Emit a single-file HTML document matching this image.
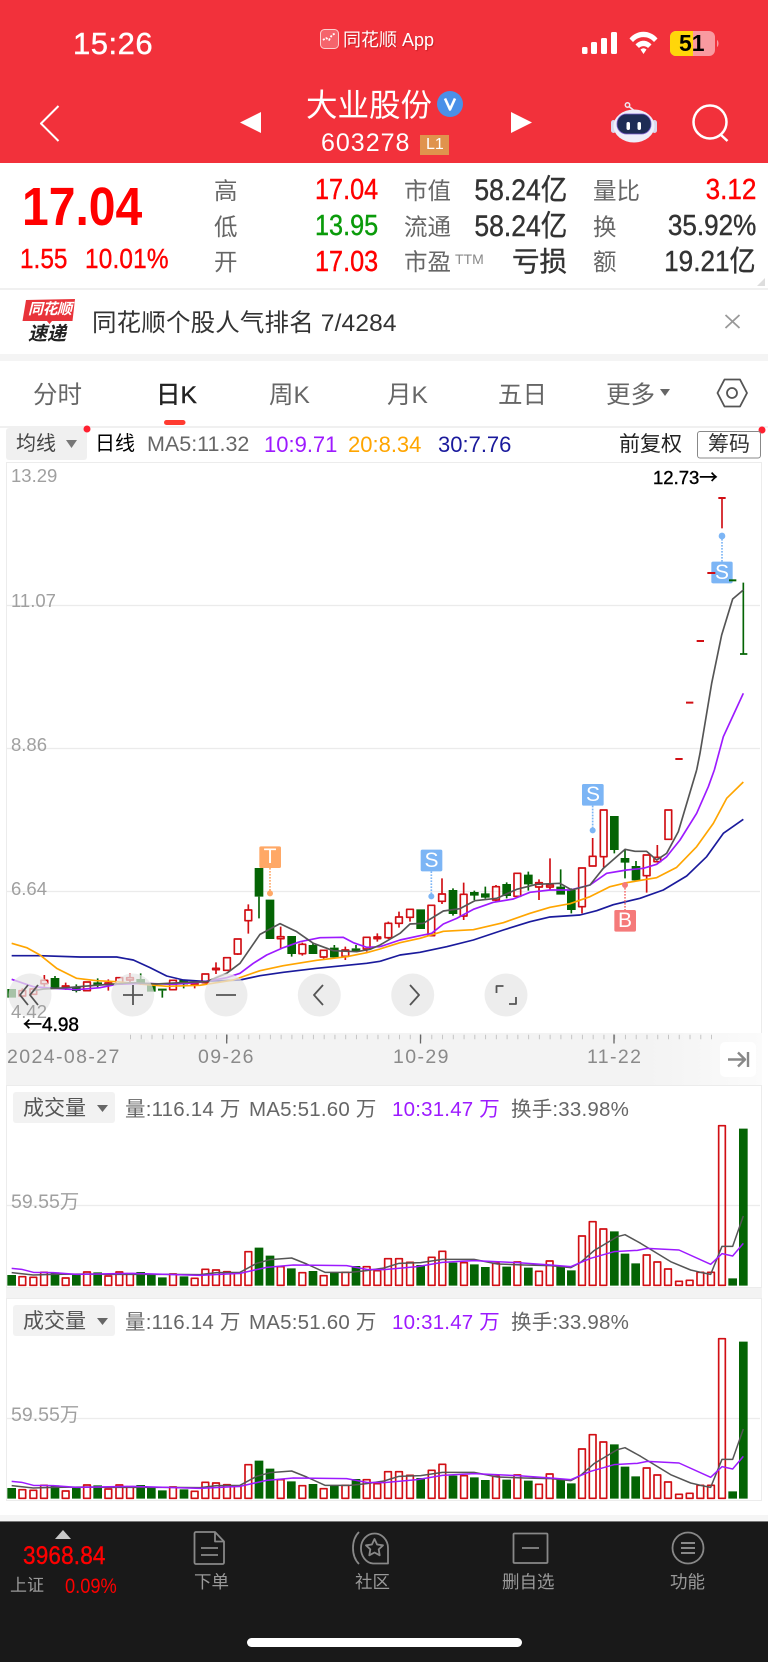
<!DOCTYPE html>
<html lang="zh"><head><meta charset="utf-8"><title>大业股份</title>
<style>
html,body{margin:0;padding:0;background:#fff}
#p{position:relative;width:768px;height:1662px;overflow:hidden;background:#fff;font-family:"Liberation Sans","Noto Sans CJK SC",sans-serif}
.b{position:absolute}
.t{position:absolute;line-height:1;white-space:nowrap}
.n{transform:scaleX(.87);transform-origin:left center}
.nr{transform:scaleX(.9);transform-origin:right center}
.m{-webkit-text-stroke:.4px currentColor}
svg{position:absolute;left:0;top:0}
svg path{stroke-linejoin:round}
.lab{color:#666;font-size:23.5px}
.r{color:#f00}
.dk{color:#333}
.ax{color:#a0a0a0;font-size:18.5px}
.vt{font-size:20.5px;color:#666;letter-spacing:.2px}
.ar{font-family:"Noto Sans CJK SC",sans-serif}
.bd{width:22px;text-align:center;font-size:21px;line-height:22px;color:#fff}
.dt{font-size:19.5px;color:#8a8a8a;letter-spacing:1.4px;top:1048px}
</style></head><body><div id="p">
<div class="b" style="left:0;top:0;width:768px;height:163px;background:#f2313b"></div>
<div class="b" style="left:0;top:288px;width:768px;height:1.5px;background:#f0f0f0"></div>
<div class="b" style="left:0;top:354px;width:768px;height:7px;background:#f4f4f4"></div>
<div class="b" style="left:0;top:425.5px;width:768px;height:2px;background:#f0f0f0"></div>
<div class="b" style="left:6px;top:428px;width:81px;height:32px;background:#f0f0f0;border-radius:3px"></div>
<div class="b" style="left:6px;top:462px;width:754px;height:570px;border:1.5px solid #ececec;box-sizing:content-box"></div>
<div class="b" style="left:6px;top:1033px;width:756px;height:52px;background:linear-gradient(90deg,#f3f3f3 85%,#fbfbfb)"></div>
<div class="b" style="left:6px;top:1085px;width:754px;height:201px;border:1.5px solid #ececec"></div>
<div class="b" style="left:6px;top:1288px;width:756px;height:10px;background:#f3f3f3"></div>
<div class="b" style="left:6px;top:1298px;width:754px;height:201px;border:1.5px solid #ececec"></div>
<div class="b" style="left:0;top:1515px;width:768px;height:6px;background:#f5f5f5"></div>
<div class="b" style="left:0;top:1521px;width:768px;height:141px;background:#191919;border-top:1px solid #777;box-sizing:border-box"></div>
<div class="b" style="left:13px;top:1092px;width:102px;height:31px;background:#f2f2f2;border-radius:3px"></div>
<div class="b" style="left:13px;top:1305px;width:102px;height:31px;background:#f2f2f2;border-radius:3px"></div>

<svg width="768" height="1662" viewBox="0 0 768 1662" fill="none">
<!-- status icons -->
<g fill="#fff">
<rect x="582" y="47" width="5.500" height="7" rx="1.500"/><rect x="591" y="42" width="6" height="12" rx="1.500"/><rect x="601" y="38" width="6" height="16" rx="1.500"/><rect x="611" y="32" width="6" height="22" rx="1.500"/>
<path d="M629.500 38.500C637 29.500 650 29.500 657.500 38.500L654 42C648.500 35.500 638.500 35.500 633 42z"/>
<path d="M635.500 44.500C640 39.500 647 39.500 651.500 44.500L648 48C645.500 45.500 641.500 45.500 639 48z"/>
<path d="M640.500 49.500C642.500 47.800 644.500 47.800 646.500 49.500L643.500 54z"/>
</g>
<rect x="670" y="31" width="45" height="25" rx="6" fill="#f99aa0"/>
<path d="M693 31H676a6 6 0 0 0-6 6v13a6 6 0 0 0 6 6h17z" fill="#ffd60a"/>
<path d="M717 40c2 1 2 6 0 7z" fill="#f99aa0"/>
<!-- app icon -->
<rect x="320.500" y="29.500" width="18" height="19" rx="4" fill="#fff" fill-opacity=".25" stroke="#fbd0d0"/>
<path d="M323 40l3-2 3 2 3-5 4-2" stroke="#fff" stroke-width="1.800" stroke-dasharray="2 1.500"/>
<!-- nav -->
<path d="M58.500 106L41 123.500 58.500 141" stroke="#fff" stroke-width="2"/>
<path d="M261 112v21l-21-10.500zM511 112v21l21-10.500z" fill="#fff"/>
<circle cx="450" cy="104" r="13" fill="#4a90e8"/>
<path d="M445 98.500l5 11 5-11" stroke="#fff" stroke-width="2.600"/>
<rect x="420" y="135" width="29" height="20" fill="#e0934d"/>
<!-- robot -->
<circle cx="627.500" cy="105" r="2.200" stroke="#f0e8f0" stroke-width="1.500"/><path d="M629 106.500l5 4" stroke="#f0e8f0" stroke-width="1.500"/>
<rect x="611" y="120" width="5" height="13" rx="2.500" fill="#d8d8ee"/><rect x="652" y="120" width="5" height="13" rx="2.500" fill="#d8d8ee"/>
<ellipse cx="634" cy="126" rx="20.500" ry="16.500" fill="#eeeefa"/>
<rect x="617" y="114" width="34" height="20" rx="9.500" fill="#1e2c55" stroke="#7a5ccc" stroke-width=".8"/>
<rect x="626.500" y="122" width="3.500" height="8" rx="1.700" fill="#fff"/><rect x="637.500" y="122" width="3.500" height="8" rx="1.700" fill="#fff"/>
<circle cx="710" cy="122" r="16.500" stroke="#fff" stroke-width="2.500"/><path d="M720.500 134.500l7 6.500" stroke="#fff" stroke-width="2.500"/>
<!-- corner -->
<path d="M765 278v8h-8z" fill="#ddd"/>
<!-- banner logo -->
<path d="M26 300L75 299l-2.500 22H52l-2.500 3-2.500-3H22.500z" fill="#e8333a"/>
<path d="M725.500 315l14 13M739.500 315l-14 13" stroke="#999" stroke-width="1.800"/>
<!-- tabs -->
<rect x="164" y="420" width="21.500" height="5" rx="2.500" fill="#ff3b30"/>
<path d="M660 389h10l-5 7z" fill="#666"/>
<path d="M717.500 393l7-13.500h15.500l7 13.500-7 13.500h-15.500z" stroke="#555" stroke-width="1.800"/>
<circle cx="732" cy="393" r="5" stroke="#555" stroke-width="1.800"/>
<circle cx="87" cy="429" r="3.500" fill="#ff2030"/><circle cx="762" cy="430" r="3.500" fill="#ff2030"/>
<path d="M66 440h11l-5.500 8z" fill="#777"/>
<rect x="697.500" y="431.500" width="63" height="26.500" rx="2.500" stroke="#888" stroke-width="1"/>
<!-- grid -->
<path d="M7 605.500H760M7 748.500H760M7 891.500H760" stroke="#ebebeb" stroke-width="1.200"/>
<path d="M7 1205.500H760M7 1418.500H760" stroke="#ececec" stroke-width="1.200"/>
<!-- ticks -->
<path d="M130 1037H712" stroke="#c4c4c4" stroke-width="4.500" stroke-dasharray="1 9.760"/>
<path d="M226.700 1034.500v9M420.500 1034.500v9M614 1034.500v9" stroke="#666" stroke-width="1.300"/>
<rect x="720" y="1042" width="36" height="35" rx="5" fill="#fff"/>
<path d="M728 1059.500h16M738 1052.500l7 7-7 7M748 1052v15" stroke="#888" stroke-width="2.400"/>

<!-- left candles -->
<g transform="translate(0 800) scale(.33333)">
<path stroke="#d10f14" stroke-width="5" d="M57 572h20v16h-20zM67 565V572M67 588V595M90 567h20v16h-20zM123 541h20v10h-20zM133 525V541M133 551V560M187 558h20v3h-20zM197 548V558M197 561V570M251 546h20v26h-20zM315 549h20v3h-20zM325 538V549M325 552V572M348 533h20v19h-20zM380 533h20v7h-20zM390 520V533M390 540V548M509 541h20v28h-20zM574 550h20v3h-20zM584 545V550M584 553V565M606 522h20v26h-20zM638 505h20v4h-20zM648 487V505M648 509V522M671 473h20v38h-20zM703 417h20v45h-20zM713 462V465M735 330h20v32h-20zM745 313V330M745 362V401M832 410h20v6h-20zM842 380V410M842 416V445M897 433h20v28h-20zM907 428V433M907 461V467M961 451h20v20h-20zM971 471V476M1026 450h20v19h-20zM1036 440V450M1036 469V480M1090 412h20v35h-20zM1100 447V455M1122 411h20v5h-20zM1132 400V411M1132 416V425"/>
<path stroke="#046404" stroke-width="26" d="M35 567V593M165 534V563M229 560V573M293 547V556M422 537V550M454 550V575M487 566V572M551 540V553M777 204V290M810 299V417M875 408V462M939 435V462M1003 443V472M1068 445V455"/>
<path stroke="#046404" stroke-width="5" d="M165 528V567M229 553V577M293 535V565M422 520V555M487 572V593M551 553V565M777 290V355M875 462V470M939 428V435M1003 435V443M1068 435V445"/>
<path stroke="#1a1a9c" stroke-width="5" d="M35 467L120 467 240 471 350 471 400 480 450 503 500 528 550 540 610 544 720 540 780 527 850 517 950 505 1040 496 1100 490 1140 484"/>
<path stroke="#ffa500" stroke-width="5" d="M35 430L80 443 120 465 170 505 230 535 290 542 350 545 420 552 500 559 600 556 700 540 780 512 850 497 950 481 1040 470 1100 458 1140 447"/>
<path stroke="#9d1aff" stroke-width="5" d="M35 538L100 560 160 565 230 569 300 563 350 553 430 550 520 553 600 547 680 533 720 520 760 490 800 465 850 443 900 425 960 413 1030 412 1060 428 1100 442 1140 440"/>
<path stroke="#555" stroke-width="5" d="M100 572L130 567 200 563 300 555 400 548 470 552 560 547 620 545 680 520 720 490 780 403 840 371 890 395 940 430 1000 452 1070 455 1110 448 1140 435"/>
<rect x="778" y="139" width="65" height="65" rx="5" fill="#ffa866"/>
<path d="M810 204V280" stroke="#ffa866" stroke-width="5" stroke-dasharray="5 4"/><circle cx="810" cy="280" r="9" fill="#ffa866"/>
</g>
<!-- right candles -->
<g transform="translate(380 770) scale(.33333)">
<path stroke="#d10f14" stroke-width="5" d="M15 460h20v43h-20zM25 455V460M25 503V507M47 441h20v19h-20zM57 425V441M57 460V473M80 418h20v24h-20zM90 442V455M144 406h20v91h-20zM176 372h20v22h-20zM186 325V372M186 394V402M241 373h20v65h-20zM251 338V373M251 438V450M338 350h20v40h-20zM348 345V350M348 390V396M402 310h20v69h-20zM467 338h20v13h-20zM477 328V338M477 351V390M500 345h20v6h-20zM510 265V345M510 351V360M596 294h20v116h-20zM606 410V430M628 259h20v29h-20zM638 204V259M661 120h20v140h-20zM671 260V292M790 255h20v62h-20zM800 317V368M822 262h20v13h-20zM832 225V262M855 120h20v88h-20z"/>
<path stroke="#046404" stroke-width="26" d="M122 418V477M219 360V432M283 366V377M316 370V383M380 342V378M445 314V343M542 350V374M574 360V420M703 138V240M735 264V278M768 288V331"/>
<path stroke="#046404" stroke-width="5" d="M219 355V437M283 362V390M316 350V386M380 337V385M445 305V362M542 298V350M574 355V430M703 240V250M735 238V325M768 273V288"/>
<path stroke="#1a1a9c" stroke-width="5" d="M0 574L60 555 120 547 200 530 280 510 370 480 450 455 510 441 600 435 650 422 700 404 780 385 850 360 920 318 980 260 1030 190 1090 148"/>
<path stroke="#ffa500" stroke-width="5" d="M0 537L60 518 120 505 190 484 280 479 370 458 450 430 510 412 570 401 630 380 690 350 740 338 830 323 890 292 950 230 1000 160 1040 85 1090 36"/>
<path stroke="#9d1aff" stroke-width="5" d="M0 530L60 510 120 497 155 490 190 462 230 445 280 418 340 397 400 387 450 367 510 360 570 360 630 345 680 310 740 300 790 295 830 283 860 260 900 210 950 130 985 50 1003 0"/>
<path stroke="#555" stroke-width="5" d="M0 525L60 490 90 462 130 460 190 423 240 416 285 392 350 385 410 358 470 343 540 340 575 360 630 345 670 295 735 238 765 244 800 244 830 270 860 250 895 185 950 0"/>
<rect x="122" y="239" width="65" height="65" rx="5" fill="#7cb5f5"/><path d="M154 304V379" stroke="#7cb5f5" stroke-width="5" stroke-dasharray="5 4"/><circle cx="154" cy="379" r="9" fill="#7cb5f5"/>
<rect x="606" y="42" width="65" height="65" rx="5" fill="#7cb5f5"/><path d="M638 107V181" stroke="#7cb5f5" stroke-width="5" stroke-dasharray="5 4"/><circle cx="638" cy="181" r="9" fill="#7cb5f5"/>
<rect x="703" y="420" width="65" height="65" rx="5" fill="#f57a7a"/><path d="M735 345V420" stroke="#f57a7a" stroke-width="5" stroke-dasharray="5 4"/><circle cx="735" cy="345" r="9" fill="#f57a7a"/>
</g>
<!-- top-right candles -->
<g transform="translate(600 440) scale(.33333)">
<path stroke="#d10f14" stroke-width="6" d="M226 957h22M258 788h22M290 603h22M355 174h22"/>
<path stroke="#d10f14" stroke-width="5" d="M366 174V265"/>
<path stroke="#046404" stroke-width="5" d="M430 428V642M420 642h22"/>
<path stroke="#9d1aff" stroke-width="5" d="M343 990L370 890 400 825 430 760"/>
<path stroke="#555" stroke-width="5" d="M290 990L300 940 335 730 365 585 398 477 430 450"/>
<rect x="334" y="365" width="64" height="65" rx="5" fill="#7cb5f5"/><path d="M366 288V365" stroke="#7cb5f5" stroke-width="5" stroke-dasharray="5 4"/><circle cx="366" cy="288" r="10" fill="#7cb5f5"/>
<path stroke="#d10f14" stroke-width="6" d="M322 399h24"/><path stroke="#046404" stroke-width="6" d="M387 421h22"/>
</g>
<!-- volume -->
<g id="vol">
<g transform="translate(0 1080) scale(.33333)">
<path stroke="#046404" stroke-width="26" d="M35 617V585M165 617V577M229 617V585M293 617V577M422 617V576M454 617V583M487 617V592M552 617V589M777 617V503M810 617V527M874 617V565M939 617V573M1003 617V578M1068 617V558"/>
<path stroke="#d10f14" stroke-width="5" d="M57 590h20V616h-20zM90 592h20V616h-20zM122 577h20V616h-20zM187 594h20V616h-20zM251 576h20V616h-20zM315 588h20V616h-20zM348 576h20V616h-20zM380 581h20V616h-20zM509 582h20V616h-20zM574 595h20V616h-20zM606 568h20V616h-20zM638 570h20V616h-20zM671 575h20V616h-20zM703 580h20V616h-20zM735 515h20V616h-20zM832 560h20V616h-20zM897 578h20V616h-20zM961 587h20V616h-20zM1026 577h20V616h-20zM1090 560h20V616h-20zM1122 572h20V616h-20z"/>
<path stroke="#555" stroke-width="4.500" d="M35 578L100 585 160 583 260 582 320 583 500 583 600 584 650 578 720 577 770 550 810 539 875 534 920 552 975 577 1050 577 1100 572 1152 564"/>
<path stroke="#9d1aff" stroke-width="4.500" d="M35 565L65 568 100 577 160 578 230 583 400 580 500 583 600 586 720 580 800 562 880 555 1040 557 1100 568 1152 569"/>
</g>
<g transform="translate(384 1080) scale(.33333)">
<path stroke="#046404" stroke-width="26" d="M110 617V555M207 617V548M271 617V553M304 617V561M368 617V560M433 617V563M530 617V560M562 617V571M691 617V454M723 617V521M755 617V550M1046 617V595M1078 617V146"/>
<path stroke="#d10f14" stroke-width="5" d="M2 536h20V616h-20zM35 536h20V616h-20zM68 547h20V616h-20zM133 532h20V616h-20zM165 514h20V616h-20zM230 548h20V616h-20zM326 550h20V616h-20zM390 546h20V616h-20zM455 574h20V616h-20zM487 543h20V616h-20zM584 468h20V616h-20zM616 425h20V616h-20zM648 447h20V616h-20zM778 525h20V616h-20zM810 546h20V616h-20zM842 567h20V616h-20zM875 604h20V616h-20zM907 601h20V616h-20zM939 577h20V616h-20zM971 577h20V616h-20zM1004 137h20V616h-20z"/>
<path stroke="#555" stroke-width="4.500" d="M0 564L45 550 110 548 175 538 270 538 340 552 420 555 500 557 560 563 590 547 630 512 700 470 723 464 770 490 860 545 920 570 950 577 980 583 1014 499 1046 499 1078 408"/>
<path stroke="#9d1aff" stroke-width="4.500" d="M0 569L100 560 175 547 270 542 400 548 500 555 560 560 620 535 690 515 760 511 790 505 885 510 980 553 1014 521 1046 528 1078 490"/>
</g>
</g>
<use href="#vol" x="0" y="213"/>
<path d="M97 1105h11l-5.500 7zM97 1318h11l-5.500 7z" fill="#666"/>
<!-- bottom icons -->
<g stroke="#888" stroke-width="1.800">
<path d="M196 1532h19l9 9.500v21a1.500 1.500 0 0 1-1.500 1.500h-26.500a1.500 1.500 0 0 1-1.500-1.500v-29a1.500 1.500 0 0 1 1.500-1.500zM215 1532v9.500h9M201 1548h17M201 1555h17"/>
<path d="M361 1548a13.500 14.500 0 0 1 27 0v15.500h-15a13 15 0 0 1-12-15.500zM359 1532C351 1540 351 1556 359 1564"/>
<path d="M374.500 1539l2.600 5.500 5.900.8-4.300 4.100 1 5.900-5.200-2.800-5.200 2.800 1-5.900-4.300-4.100 5.900-.8z"/>
<rect x="513.500" y="1533.500" width="34" height="29.500" rx="1"/><path d="M522 1548h17"/>
<circle cx="688" cy="1548" r="15.500"/><path d="M681 1543h14M681 1548h14M681 1553h14" stroke-width="2"/>
</g>
<path d="M55 1539l8-9 8 9z" fill="#c8c8c8"/>
<rect x="247" y="1638" width="275" height="9" rx="4.500" fill="#fff"/>
<!-- float buttons -->
<g fill="#e6e6e6" fill-opacity=".72">
<circle cx="30" cy="995" r="21.500"/><circle cx="132.700" cy="995" r="21.500"/><circle cx="226" cy="995" r="21.500"/><circle cx="319.300" cy="995" r="21.500"/><circle cx="412.700" cy="995" r="21.500"/><circle cx="506" cy="995" r="21.500"/>
</g>
<g stroke="#555" stroke-width="1.800">
<path d="M28 985l-8 10 8 10M38 985l-8 10 8 10"/>
<path d="M123 995h20M133 985v20M216 995h20M323 985l-9 10 9 10M410 985l9 10-9 10M496.500 993v-7h7M516 997v7h-7"/>
</g>
</svg>

<!-- status text -->
<div class="t m" style="left:73px;top:28px;font-size:31px;color:#fff;letter-spacing:.5px">15:26</div>
<div class="t" style="left:343px;top:31px;font-size:18px;color:#fff;text-shadow:1px 1px 1px rgba(120,0,0,.35)">同花顺 App</div>
<div class="t" style="left:679px;top:32px;font-size:23px;color:#000;font-weight:700">51</div>
<!-- title -->
<div class="t" style="left:306px;top:90px;font-size:31.500px;color:#fff">大业股份</div>
<div class="t" style="left:321px;top:131px;font-size:25px;color:#fff;letter-spacing:1px">603278</div>
<div class="t" style="left:426px;top:137px;font-size:16px;color:#fff">L1</div>
<!-- price -->
<div class="t r" style="left:22px;top:180px;font-size:54px;transform:scaleX(.89);transform-origin:left center;font-weight:700">17.04</div>
<div class="t r n m" style="left:20px;top:245px;font-size:28px">1.55</div>
<div class="t r n m" style="left:85px;top:245px;font-size:28px;letter-spacing:.2px">10.01%</div>
<div class="t lab" style="left:214px;top:180px">高</div>
<div class="t lab" style="left:214px;top:216px">低</div>
<div class="t lab" style="left:214px;top:251px">开</div>
<div class="t r n m" style="left:315px;top:176px;font-size:29px">17.04</div>
<div class="t n m" style="left:315px;top:212px;font-size:29px;color:#0a9b0a">13.95</div>
<div class="t r n m" style="left:315px;top:248px;font-size:29px">17.03</div>
<div class="t lab" style="left:404px;top:180px">市值</div>
<div class="t lab" style="left:404px;top:216px">流通</div>
<div class="t lab" style="left:404px;top:251px">市盈</div>
<div class="t" style="left:455px;top:252px;font-size:14px;color:#888">TTM</div>
<div class="t dk nr m" style="right:201px;top:176px;font-size:29.500px">58.24亿</div>
<div class="t dk nr m" style="right:201px;top:212px;font-size:29.500px">58.24亿</div>
<div class="t dk m" style="left:512px;top:248px;font-size:27.500px">亏损</div>
<div class="t lab" style="left:593px;top:180px">量比</div>
<div class="t lab" style="left:593px;top:216px">换</div>
<div class="t lab" style="left:593px;top:251px">额</div>
<div class="t r nr m" style="right:12px;top:176px;font-size:29px">3.12</div>
<div class="t dk nr m" style="right:12px;top:212px;font-size:29px">35.92%</div>
<div class="t dk nr m" style="right:12px;top:248px;font-size:29px">19.21亿</div>
<!-- banner -->
<div class="t" style="left:28px;top:302px;font-size:15px;color:#fff;font-weight:700;font-style:italic;letter-spacing:-.5px">同花顺</div>
<div class="t" style="left:28px;top:325px;font-size:19px;color:#222;font-weight:700;font-style:italic">速递</div>
<div class="t dk" style="left:92px;top:312px;font-size:24.500px;letter-spacing:.15px">同花顺个股人气排名 7/4284</div>
<!-- tabs -->
<div class="t" style="left:33px;top:384px;font-size:24.500px;color:#666">分时</div>
<div class="t m" style="left:156px;top:384px;font-size:24.500px;color:#222">日K</div>
<div class="t" style="left:269px;top:384px;font-size:24.500px;color:#666">周K</div>
<div class="t" style="left:387px;top:384px;font-size:24.500px;color:#666">月K</div>
<div class="t" style="left:498px;top:384px;font-size:24.500px;color:#666">五日</div>
<div class="t" style="left:606px;top:384px;font-size:24.500px;color:#666">更多</div>
<!-- MA row -->
<div class="t" style="left:16px;top:434px;font-size:20px;color:#444">均线</div>
<div class="t" style="left:95px;top:434px;font-size:20px;color:#000">日线</div>
<div class="t" style="left:147px;top:434px;font-size:21.500px;color:#666">MA5:11.32</div>
<div class="t" style="left:264px;top:434px;font-size:22px;color:#9d1aff">10:9.71</div>
<div class="t" style="left:348px;top:434px;font-size:22px;color:#ffa500">20:8.34</div>
<div class="t" style="left:438px;top:434px;font-size:22px;color:#1a1a9c">30:7.76</div>
<div class="t" style="left:619px;top:434px;font-size:21px;color:#222">前复权</div>
<div class="t" style="left:708px;top:434px;font-size:21px;color:#333">筹码</div>
<!-- axis -->
<div class="t ax" style="left:11px;top:467px">13.29</div>
<div class="t ax" style="left:11px;top:592px">11.07</div>
<div class="t ax" style="left:11px;top:736px">8.86</div>
<div class="t ax" style="left:11px;top:880px">6.64</div>
<div class="t ax" style="left:11px;top:1003px">4.42</div>
<div class="t m" style="left:23px;top:1014px;font-size:19px;color:#000"><span class="ar">←</span>4.98</div>
<div class="t m" style="left:653px;top:468px;font-size:18.500px;color:#000">12.73<span class="ar">→</span></div>
<div class="t bd" style="left:259px;top:846px">T</div>
<div class="t bd" style="left:420.500px;top:849.500px">S</div>
<div class="t bd" style="left:582px;top:784px">S</div>
<div class="t bd" style="left:614px;top:910px">B</div>
<div class="t bd" style="left:711px;top:562px">S</div>
<div class="t dt" style="left:7px">2024-08-27</div>
<div class="t dt" style="left:198px">09-26</div>
<div class="t dt" style="left:393px">10-29</div>
<div class="t dt" style="left:587px">11-22</div>
<!-- vol labels -->
<div class="t" style="left:23px;top:1098px;font-size:21px;color:#555">成交量</div>
<div class="t vt" style="left:125px;top:1100px">量:116.14 万</div>
<div class="t vt" style="left:249px;top:1100px">MA5:51.60 万</div>
<div class="t vt" style="left:392px;top:1100px;color:#9d1aff">10:31.47 万</div>
<div class="t vt" style="left:511px;top:1100px">换手:33.98%</div>
<div class="t" style="left:11px;top:1193px;font-size:19.500px;color:#a0a0a0">59.55万</div>
<div class="t" style="left:23px;top:1311px;font-size:21px;color:#555">成交量</div>
<div class="t vt" style="left:125px;top:1313px">量:116.14 万</div>
<div class="t vt" style="left:249px;top:1313px">MA5:51.60 万</div>
<div class="t vt" style="left:392px;top:1313px;color:#9d1aff">10:31.47 万</div>
<div class="t vt" style="left:511px;top:1313px">换手:33.98%</div>
<div class="t" style="left:11px;top:1406px;font-size:19.500px;color:#a0a0a0">59.55万</div>
<!-- bottom -->
<div class="t r m" style="left:23px;top:1544px;font-size:25px;letter-spacing:.2px;transform:scaleX(.9);transform-origin:left center">3968.84</div>
<div class="t" style="left:10px;top:1577px;font-size:17px;color:#999">上证</div>
<div class="t r n" style="left:65px;top:1576px;font-size:21px">0.09%</div>
<div class="t" style="left:194px;top:1574px;font-size:17.500px;color:#999">下单</div>
<div class="t" style="left:355px;top:1574px;font-size:17.500px;color:#999">社区</div>
<div class="t" style="left:502px;top:1574px;font-size:17.500px;color:#999">删自选</div>
<div class="t" style="left:670px;top:1574px;font-size:17.500px;color:#999">功能</div>
</div></body></html>
